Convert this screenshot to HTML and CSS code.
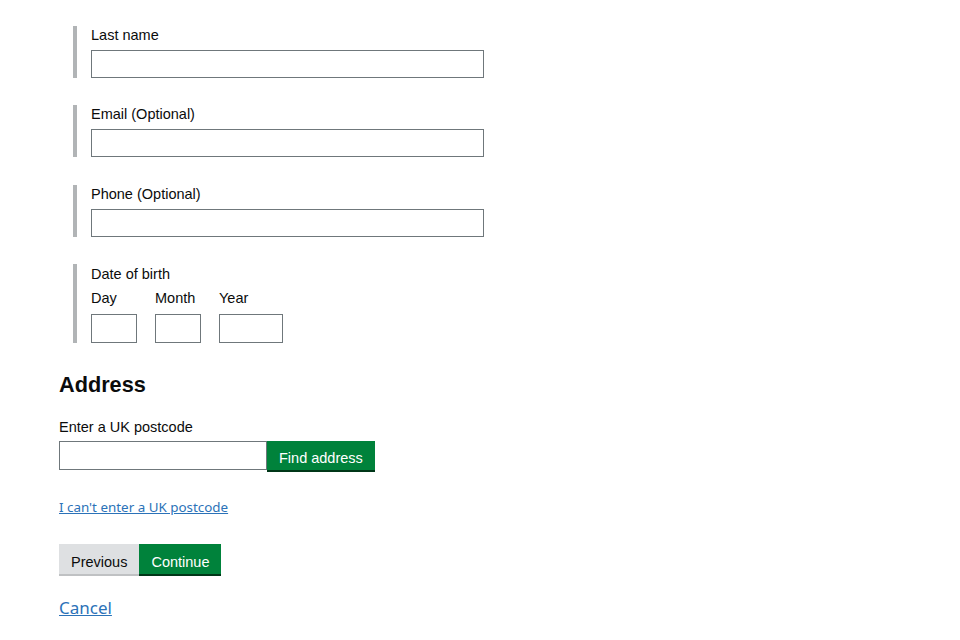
FILE: index.html
```html
<!DOCTYPE html>
<html lang="en">

<head>
  <meta charset="UTF-8" />
  <title>Your details</title>
  <link rel="stylesheet" href="styles.css">
</head>

<body>
  <main class="page">
    <div class="field-group">
      <label class="label" for="last-name">Last name</label>
      <input class="input input-wide" id="last-name" type="text" />
    </div>

    <div class="field-group">
      <label class="label" for="email">Email (Optional)</label>
      <input class="input input-wide" id="email" type="email" />
    </div>

    <div class="field-group">
      <label class="label" for="phone">Phone (Optional)</label>
      <input class="input input-wide" id="phone" type="tel" />
    </div>

    <div class="field-group date-group">
      <span class="label">Date of birth</span>
      <div class="date-row">
        <div class="date-item">
          <label class="label" for="dob-day">Day</label>
          <input class="input input-day" id="dob-day" type="text" />
        </div>
        <div class="date-item">
          <label class="label" for="dob-month">Month</label>
          <input class="input input-day" id="dob-month" type="text" />
        </div>
        <div class="date-item">
          <label class="label" for="dob-year">Year</label>
          <input class="input input-year" id="dob-year" type="text" />
        </div>
      </div>
    </div>

    <h2 class="heading">Address</h2>

    <div class="postcode">
      <label class="label" for="postcode">Enter a UK postcode</label>
      <div class="postcode-row">
        <input class="input input-postcode" id="postcode" type="text" />
        <button type="button" class="button button-green">Find address</button>
      </div>
    </div>

    <a class="link link-small" href="#">I can't enter a UK postcode</a>

    <div class="actions">
      <button type="button" class="button button-grey">Previous</button>
      <button type="button" class="button button-green">Continue</button>
    </div>

    <a class="link link-cancel" href="#">Cancel</a>
  </main>
</body>

</html>
```

FILE: styles.css
```css
:root {
  --text: #0b0c0c;
  --border: #6f777b;
  --bar: #b1b4b6;
  --green: #00823b;
  --green-shadow: #003618;
  --grey: #dee0e2;
  --grey-shadow: #bfc1c3;
  --link: #2b72b8;
  --font: 'Liberation Sans', Arial, sans-serif;
}

* {
  box-sizing: border-box;
}

body {
  margin: 0;
  font-family: var(--font);
  color: var(--text);
  background: #ffffff;
}

.page {
  padding: 26px 0 0 59px;
  display: flex;
  flex-direction: column;
  align-items: flex-start;
}

.field-group {
  margin-left: 14px;
  border-left: 4px solid var(--bar);
  padding-left: 14px;
  margin-bottom: 27.4px;
  display: flex;
  flex-direction: column;
}

.label {
  font-size: 14.5px;
  line-height: 18px;
  margin: 0 0 6px;
}

.input {
  height: 28px;
  border: 1px solid var(--border);
  border-radius: 0;
  font-family: var(--font);
  font-size: 14.5px;
  padding: 4px 6px;
  margin: 0;
}

.input-wide {
  width: 393px;
}

.date-group > .label {
  margin-top: 1px;
}

.date-row {
  display: flex;
  gap: 18px;
}

.date-item {
  display: flex;
  flex-direction: column;
}

.date-item .label {
  margin-bottom: 7px;
}

.input-day {
  width: 46px;
  height: 29px;
}

.input-year {
  width: 64px;
  height: 29px;
}

.heading {
  font-size: 21.7px;
  font-weight: 700;
  margin: 0 0 19px;
  line-height: 28px;
}

.postcode {
  display: flex;
  flex-direction: column;
}

.postcode .label {
  margin-bottom: 5px;
}

.postcode-row {
  display: flex;
}

.input-postcode {
  width: 208px;
  height: 29px;
}

.button {
  font-family: var(--font);
  font-size: 14.5px;
  line-height: 18px;
  border: none;
  border-radius: 0;
  padding: 6px 12px 0;
  height: 29px;
  cursor: pointer;
}

.button-green {
  background: var(--green);
  color: #ffffff;
  box-shadow: 0 2px 0 var(--green-shadow);
}

.button-grey {
  background: var(--grey);
  color: var(--text);
  box-shadow: 0 2px 0 var(--grey-shadow);
}

.link {
  font-family: 'Noto Sans', sans-serif;
  color: var(--link);
  text-decoration: underline;
}

.link-small {
  font-size: 13.4px;
  margin-top: 28px;
}

.actions {
  display: flex;
  margin-top: 28px;
}

.actions .button {
  height: 30px;
  padding-top: 6px;
}

.link-cancel {
  font-size: 17px;
  margin-top: 22px;
}
```
